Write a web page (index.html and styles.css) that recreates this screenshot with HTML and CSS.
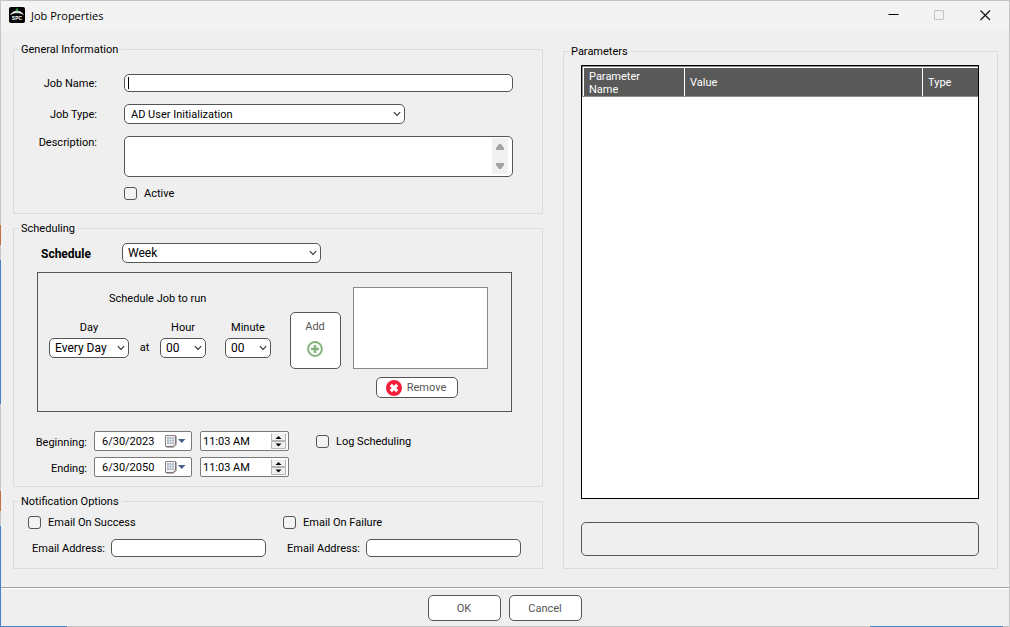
FILE: index.html
```html
<!DOCTYPE html>
<html lang="en">
<head>
<meta charset="utf-8">
<title>Job Properties</title>
<link rel="stylesheet" href="styles.css">
</head>
<body>
<svg class="defs" aria-hidden="true">
  <symbol id="chevron" viewBox="0 0 8 6"><path d="M.8 1.2 4 4.4 7.2 1.2" fill="none" stroke="#333" stroke-width="1.1"/></symbol>
  <symbol id="calendar" viewBox="0 0 21 14">
    <path d="M.5 1.500h10v8.500l-2.500 2.500h-7.500z" fill="#f5f3f4" stroke="#8c8084"/>
    <path d="M11 2v8.500l-2.500 2.500h-7" fill="none" stroke="#6e6266"/>
    <path d="M2 3h7v7H2z" fill="#a9b3c4"/>
    <path d="M4.300 3v7M6.700 3v7M2 5.300h7M2 7.700h7" stroke="#eef1f6" stroke-width=".7"/>
    <path d="M13 5h7.500l-3.750 4z" fill="#46608a"/>
  </symbol>
  <symbol id="spin-up" viewBox="0 0 15 8"><path d="M.5.5v7h14V.5" fill="#f0f0f0" stroke="#b4b4b4"/><path d="M4.500 6h6l-3-3z" fill="#000"/></symbol>
  <symbol id="spin-down" viewBox="0 0 15 8"><path d="M.5.5v7h14v-7z" fill="#f0f0f0" stroke="#b4b4b4"/><path d="M4.500 2.500h6l-3 3z" fill="#000"/></symbol>
</svg>
<div class="window">
  <header class="titlebar">
    <svg class="logo" viewBox="0 0 16 16" aria-hidden="true">
      <rect width="16" height="16" rx="2" fill="#050505"/>
      <path d="M1.500 7.500C4 4.600 5.500 4.200 8 4.200s4 .4 6.500 3.300C12 6.400 10.500 5.800 8 5.800s-4 .6-6.500 1.700z" fill="#fff" stroke="#fff" stroke-width=".5"/>
      <circle cx="8" cy="2.800" r="1.300" fill="#24a83c"/>
      <text x="8" y="13" text-anchor="middle" class="logo-text">SPC</text>
    </svg>
    <h1 class="title">Job Properties</h1>
    <button class="caption" type="button" aria-label="Minimize"><svg viewBox="0 0 11 11"><path d="M.5 4.500h10" stroke="#000" fill="none"/></svg></button>
    <button class="caption" type="button" aria-label="Maximize" disabled><svg viewBox="0 0 11 11"><rect x=".5" y=".5" width="9" height="9" rx=".5" stroke="#c2c2c2" fill="none"/></svg></button>
    <button class="caption" type="button" aria-label="Close"><svg viewBox="0 0 11 11"><path d="m.5.5 9.500 9.500m0-9.500-9.500 9.500" stroke="#111" stroke-width="1.200" fill="none"/></svg></button>
  </header>

  <main class="content">
    <div class="column">
      <fieldset class="group general">
        <legend>General Information</legend>
        <div class="row">
          <label class="row-label" for="name">Job Name:</label>
          <span class="stack grow"><input class="field" id="name" type="text"><span class="caret"></span></span>
        </div>
        <div class="row">
          <label class="row-label" for="type">Job Type:</label>
          <span class="stack type"><select class="field" id="type"><option>AD User Initialization</option></select><svg class="chevron"><use href="#chevron"/></svg></span>
        </div>
        <div class="row top">
          <label class="row-label" for="description">Description:</label>
          <span class="stack grow"><textarea class="field area" id="description"></textarea>
            <svg class="scroll" viewBox="0 0 16 36" aria-hidden="true"><path d="M0 0h16v36H0z" fill="#f0f0f0"/><path d="M4 12v-2l3-4h2l3 4v2zM4 25v2l3 4h2l3-4v-2z" fill="#a3a3a3"/></svg></span>
        </div>
        <div class="row"><span class="row-label"></span><label class="check"><input type="checkbox"><span>Active</span></label></div>
      </fieldset>

      <fieldset class="group scheduling">
        <legend>Scheduling</legend>
        <div class="schedule-row">
          <label class="schedule-label" for="schedule">Schedule</label>
          <span class="stack period"><select class="field" id="schedule"><option>Week</option></select><svg class="chevron"><use href="#chevron"/></svg></span>
        </div>
        <div class="run-box">
          <div class="run-time">
            <p class="run-title">Schedule Job to run</p>
            <div class="run-fields">
              <div class="run-field day"><label for="day">Day</label><span class="stack"><select class="field" id="day"><option>Every Day</option></select><svg class="chevron"><use href="#chevron"/></svg></span></div>
              <span class="at">at</span>
              <div class="run-field num"><label for="hour">Hour</label><span class="stack"><select class="field" id="hour"><option>00</option></select><svg class="chevron"><use href="#chevron"/></svg></span></div>
              <div class="run-field num minute"><label for="minute">Minute</label><span class="stack"><select class="field" id="minute"><option>00</option></select><svg class="chevron"><use href="#chevron"/></svg></span></div>
            </div>
          </div>
          <button class="button add" type="button">Add
            <svg viewBox="0 0 16 16"><circle cx="8" cy="8" r="6.900" fill="none" stroke="#84b47c" stroke-width="2"/><path d="M8 4v8M4 8h8" stroke="#84b47c" stroke-width="2.600"/></svg>
          </button>
          <div class="run-list">
            <select class="list" size="4" aria-label="Scheduled runs"></select>
            <button class="button remove" type="button"><svg viewBox="0 0 16 16"><circle cx="8" cy="8" r="8" fill="#f5213a"/><path d="m4.800 4.800 6.400 6.400m0-6.400-6.400 6.400" stroke="#fff" stroke-width="3.200"/></svg><span>Remove</span></button>
          </div>
        </div>
        <div class="date-row">
          <label class="date-label" for="begin">Beginning:</label>
          <span class="picker date"><input id="begin" type="text" value="6/30/2023"><svg class="calendar"><use href="#calendar"/></svg></span>
          <span class="picker time"><input type="text" value="11:03 AM" aria-label="Beginning time"><span class="spinner"><button type="button" aria-label="Later"><svg><use href="#spin-up"/></svg></button><button type="button" aria-label="Earlier"><svg><use href="#spin-down"/></svg></button></span></span>
          <label class="check log"><input type="checkbox"><span>Log Scheduling</span></label>
        </div>
        <div class="date-row">
          <label class="date-label" for="end">Ending:</label>
          <span class="picker date"><input id="end" type="text" value="6/30/2050"><svg class="calendar"><use href="#calendar"/></svg></span>
          <span class="picker time"><input type="text" value="11:03 AM" aria-label="Ending time"><span class="spinner"><button type="button" aria-label="Later"><svg><use href="#spin-up"/></svg></button><button type="button" aria-label="Earlier"><svg><use href="#spin-down"/></svg></button></span></span>
        </div>
      </fieldset>

      <fieldset class="group notification">
        <legend>Notification Options</legend>
        <div class="notify-grid">
          <div class="notify">
            <label class="check"><input type="checkbox"><span>Email On Success</span></label>
            <div class="address"><label for="ok-mail">Email Address:</label><input class="field" id="ok-mail" type="text"></div>
          </div>
          <div class="notify">
            <label class="check"><input type="checkbox"><span>Email On Failure</span></label>
            <div class="address"><label for="fail-mail">Email Address:</label><input class="field" id="fail-mail" type="text"></div>
          </div>
        </div>
      </fieldset>
    </div>

    <fieldset class="group parameters">
      <legend>Parameters</legend>
      <div class="parameters-body">
        <div class="table-frame">
          <table class="table">
            <thead><tr><th class="col-name">Parameter<br>Name</th><th>Value</th><th class="col-type">Type</th></tr></thead>
          </table>
        </div>
        <output class="hint"></output>
      </div>
    </fieldset>
  </main>

  <footer class="footer">
    <button class="button action" type="button">OK</button>
    <button class="button action" type="button">Cancel</button>
  </footer>
</div>
</body>
</html>
```

FILE: styles.css
```css
* { box-sizing: border-box; }

body {
  margin: 0;
  min-height: 100vh;
  display: flex;
  font: 11px/14px Roboto, "Liberation Sans", sans-serif;
  color: #000;
  /* strips of the desktop that show round the window */
  background:
    linear-gradient(90deg, #4a86cf 67px, transparent 67px calc(100% - 140px), #4a86cf calc(100% - 140px) calc(100% - 7px), transparent calc(100% - 7px)) bottom / 100% 1px no-repeat,
    linear-gradient(#c6c6c6 225px, #c46f43 225px 245px, #c6c6c6 245px 260px, #4a7fc6 260px 404px, #c6c6c6 404px 491px, #c46f43 491px 511px, #c6c6c6 511px 526px, #4a7fc6 526px) left / 1px 100% no-repeat,
    #c4c4c4;
}

.defs { display: none; }

.window {
  flex: 1;
  margin: 1px;
  display: flex;
  flex-direction: column;
  background: #efefef;
}

.titlebar {
  display: flex;
  align-items: center;
  height: 30px;
  padding: 0 1px 2px 8px;
  background: #f3f3f3;
}
.logo { width: 16px; height: 16px; }
.logo-text { font: bold 5px "Liberation Sans", sans-serif; fill: #fff; }
.title {
  flex: 1;
  margin: 0 0 0 6px;
  padding-top: 1px;
  font: 11px/16px "Open Sans", sans-serif;
}
.caption {
  width: 46px;
  height: 28px;
  padding: 0;
  border: 0;
  background: none;
  display: grid;
  place-items: center;
}
.caption svg { width: 11px; height: 11px; }

.content {
  flex: 1;
  display: grid;
  grid-template-columns: 530fr 435fr;
  gap: 20px;
  padding: 10px 11px 18px 12px;
}
.column { display: flex; flex-direction: column; gap: 6px; min-width: 0; }

.group {
  min-width: 0;
  margin: 0;
  padding: 0;
  border: 1px solid #dcdcdc;
}
.group legend { margin-left: 5px; padding: 2px 3px 0 2px; }

/* controls */
.field {
  width: 100%;
  min-width: 0;
  height: 18px;
  margin: 0;
  padding: 0 6px;
  border: 1px solid #555;
  border-radius: 5px;
  background: #fff;
  font: inherit;
  color: #000;
}
select.field { height: 20px; appearance: none; padding: 0 5px; font-size: 12px; }
.type select.field { padding: 1px 6px 0; font-size: 11px; }
.area { height: 41px; resize: none; overflow: hidden; display: block; }

.stack { display: grid; }
.stack > * { grid-area: 1 / 1; }
.grow { flex: 1; }
.chevron { width: 8px; height: 6px; margin-right: 4px; place-self: center end; pointer-events: none; }
.caret { width: 1px; height: 12px; margin-left: 4px; background: #000; align-self: center; }
.scroll { width: 16px; height: 36px; margin: 0 5px 1px 0; place-self: center end; }

.check { display: flex; align-items: center; gap: 7px; height: 14px; white-space: nowrap; }
.check span { padding-top: 2px; }
.check input {
  appearance: none;
  width: 13px;
  height: 13px;
  margin: 0;
  border: 1px solid #555;
  border-radius: 3px;
  background: #f3f3f3;
}

.button {
  padding: 0;
  border: 1px solid #555;
  border-radius: 5px;
  background: #fff;
  font: inherit;
  color: #555;
}

/* general information */
.general > .row { margin-bottom: 12px; }
.general > .row:first-of-type { margin-top: 17px; }
.general > .row.top { margin-bottom: 9px; }
.general > .row:last-child { margin-bottom: 13px; }
.row { display: flex; align-items: center; gap: 27px; padding-right: 29px; }
.row.top { align-items: flex-start; }
.row-label { width: 83px; padding-top: 1px; text-align: right; }
.row.top .row-label { padding-top: 0; }
.type { width: 281px; }

/* scheduling */
.schedule-row { display: flex; align-items: center; margin: 7px 0 9px 27px; }
.schedule-label { width: 81px; padding-top: 1px; font-size: 12px; font-weight: bold; }
.period { width: 199px; }

.run-box {
  display: flex;
  margin: 0 30px 19px 23px;
  padding: 14px 0 13px 11px;
  border: 1px solid #555;
}
.run-title { margin: 5px 0 15px 60px; }
.run-fields { display: flex; align-items: flex-end; }
.run-field { display: grid; gap: 3px; text-align: center; }
.day { width: 80px; }
.num { width: 46px; }
.minute { margin-left: 19px; }
.at { width: 31px; line-height: 20px; text-align: center; }
.add {
  width: 51px;
  height: 57px;
  margin: 25px 12px 0 19px;
  padding: 0 1px 4px 0;
  display: flex;
  flex-direction: column;
  align-items: center;
  justify-content: center;
  gap: 7px;
}
.button svg { width: 16px; height: 16px; }
.run-list { display: grid; justify-items: center; gap: 8px; }
.list { width: 135px; height: 82px; margin: 0; border: 1px solid #828790; border-radius: 0; background: #fff; }
.remove { display: flex; align-items: center; justify-content: center; gap: 5px; width: 82px; height: 21px; margin-right: 7px; padding-right: 2px; }
.remove span { padding-top: 1px; }

.date-row { display: flex; align-items: center; margin-bottom: 6px; }
.date-row:last-child { margin-bottom: 9px; }
.date-label { width: 73px; margin-right: 7px; padding-top: 4px; text-align: right; }
.picker {
  display: flex;
  align-items: center;
  height: 20px;
  margin-right: 8px;
  border: 1px solid #7a7a7a;
  border-radius: 2px;
  background: #fff;
}
.picker input { flex: 1; min-width: 0; height: 18px; padding: 0; border: 0; background: none; font: inherit; }
.date { width: 98px; padding: 0 5px 0 7px; }
.time { width: 89px; padding: 0 2px; }
.calendar { width: 21px; height: 14px; }
.spinner { display: grid; width: 15px; }
.spinner button { width: 15px; height: 8px; padding: 0; border: 0; background: none; display: block; }
.spinner svg { display: block; width: 15px; height: 8px; }
.log { margin-left: 19px; }

/* notification options */
.notify-grid { display: grid; grid-template-columns: 1fr 1fr; gap: 17px; padding: 6px 21px 11px 14px; }
.notify { display: grid; gap: 10px; }
.address { display: flex; align-items: center; justify-content: space-between; padding-left: 4px; white-space: nowrap; }
.address label { padding-top: 1px; }
.address .field { width: 155px; }

/* parameters */
.parameters { margin-top: 2px; display: flex; flex-direction: column; }
.parameters-body { height: 100%; display: flex; flex-direction: column; gap: 23px; padding: 6px 18px 12px 17px; }
.table-frame { flex: 1; border: 1px solid #000; background: #fff; }
.table {
  width: 100%;
  table-layout: fixed;
  border-spacing: 0;
  border-top: 1px solid #8c8c8c;
  border-left: 1px solid #8c8c8c;
  border-bottom: 1px solid #8c8c8c;
}
.table th {
  height: 29px;
  padding: 1px 5px 0;
  border-top: 1px solid #fff;
  border-left: 1px solid #fff;
  background: #595959;
  color: #fff;
  font-weight: normal;
  line-height: 13px;
  text-align: left;
}
.col-name { width: 101px; }
.col-type { width: 56px; }
.hint { height: 34px; border: 1px solid #555; border-radius: 5px; }

.footer {
  display: flex;
  justify-content: center;
  gap: 8px;
  padding: 7px 0 5px;
  border-top: 1px solid #a0a0a0;
  box-shadow: inset 0 1px #fff;
}
.action { width: 73px; height: 26px; padding: 1px 1px 0 0; }
```
